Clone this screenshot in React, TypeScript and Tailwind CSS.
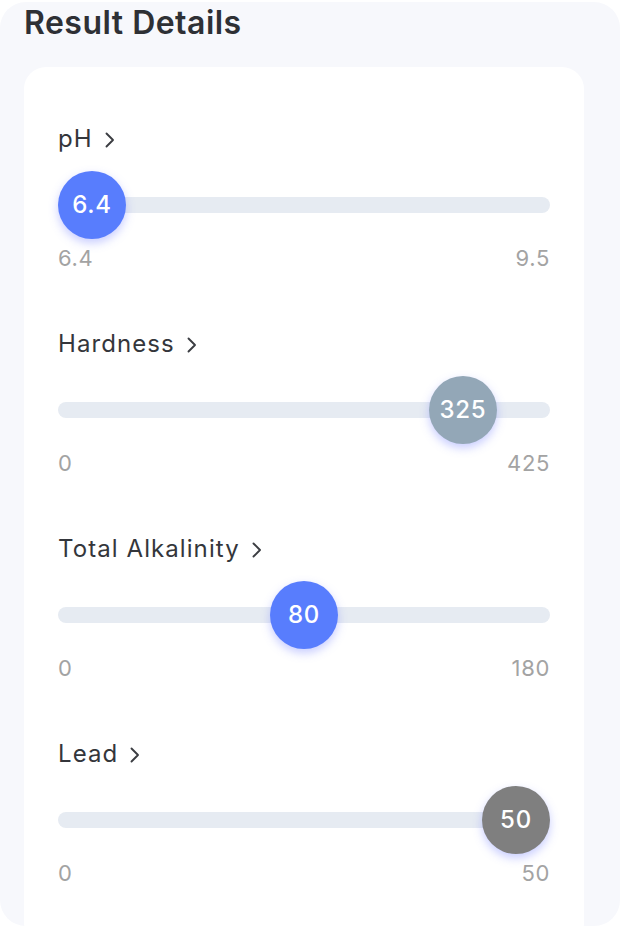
import React from 'react';

type Reading = {
  name: string;
  value: string;
  min: string;
  max: string;
  // where the thumb sits along the track, 0..1
  pos: number;
  thumb: string;
};

const readings: Reading[] = [
  { name: 'pH', value: '6.4', min: '6.4', max: '9.5', pos: 0, thumb: 'bg-[#587dfd]' },
  { name: 'Hardness', value: '325', min: '0', max: '425', pos: 0.875, thumb: 'bg-[#93a7b7]' },
  { name: 'Total Alkalinity', value: '80', min: '0', max: '180', pos: 0.5, thumb: 'bg-[#587dfd]' },
  { name: 'Lead', value: '50', min: '0', max: '50', pos: 1, thumb: 'bg-[#7f7f7f]' },
];

const Chevron = () => (
  <svg width="14" height="18" viewBox="0 0 14 18" fill="none" className="ml-[10px] mt-[1px]">
    <path d="M3.5 2.5 L10 9 L3.5 15.5" stroke="#3b3d42" strokeWidth="1.9" strokeLinecap="round" strokeLinejoin="round" />
  </svg>
);

const TRACK = 492;
const THUMB = 68;

const ReadingRow = ({ r }: { r: Reading }) => (
  <div className="flex flex-col">
    <div className="flex items-center h-[24px] text-[24px] leading-[24px] text-[#34363b] tracking-[0.045em]">
      {r.name}
      <Chevron />
    </div>
    <div className="relative h-[68px] mt-[20px] flex items-center">
      <div className="w-full h-[16px] rounded-full bg-[#e6ebf2]" />
      <div
        className={`absolute top-0 w-[68px] h-[68px] rounded-full ${r.thumb} flex items-center justify-center text-white text-[24px] font-medium tracking-[0.03em] shadow-[0_4px_10px_rgba(96,112,255,0.35)]`}
        style={{ left: r.pos * (TRACK - THUMB) }}
      >
        {r.value}
      </div>
    </div>
    <div className="flex justify-between mt-[7px] h-[24px] text-[22px] leading-[24px] text-[#a3a3a3] tracking-[0.03em]">
      <span>{r.min}</span>
      <span>{r.max}</span>
    </div>
  </div>
);

export default function App() {
  return (
    <div className="w-[620px] h-[928px] bg-white pt-[2px] font-['Inter',sans-serif]">
      <div className="h-[924px] rounded-[26px] bg-[#f7f8fc] overflow-hidden px-[24px] pt-[5px]">
        <h1 className="text-[32px] leading-[32px] font-semibold text-[#2e3035] tracking-[0.015em]">
          Result Details
        </h1>
        <div className="mt-[28px] w-[560px] rounded-[22px] bg-white px-[34px] pt-[60px] pb-[60px] flex flex-col gap-[62px]">
          {readings.map((r) => (
            <ReadingRow key={r.name} r={r} />
          ))}
        </div>
      </div>
    </div>
  );
}
